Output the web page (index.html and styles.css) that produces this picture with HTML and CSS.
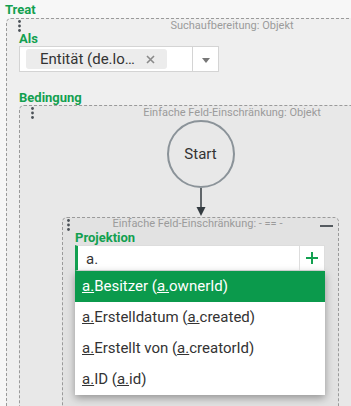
FILE: index.html
```html
<!DOCTYPE html>
<html lang="de">
<head>
    <meta charset="UTF-8">
    <title>Treat</title>
    <link rel="stylesheet" href="styles.css">
</head>
<body>
    <div class="page">
        <div class="label label-top">Treat</div>

        <!-- Suchaufbereitung -->
        <div class="node node-outer">
            <div class="node-head">
                <svg class="grip" width="3" height="12" viewBox="0 0 3 12"><circle cx="1.5" cy="1.5" r="1.4"/><circle cx="1.5" cy="6" r="1.4"/><circle cx="1.5" cy="10.5" r="1.4"/></svg>
                <span class="node-caption">Suchaufbereitung: Objekt</span>
                <span></span>
            </div>

            <div class="label">Als</div>
            <div class="select">
                <div class="select-value">
                    <span class="chip">
                        <span>Entität (de.lo…</span>
                        <svg class="chip-x" width="9" height="9" viewBox="0 0 9 9"><path d="M1 1 L8 8 M8 1 L1 8"/></svg>
                    </span>
                </div>
                <div class="select-toggle"><span class="caret"></span></div>
            </div>

            <div class="label label-gap">Bedingung</div>

            <!-- Einfache Feld-Einschränkung: Objekt -->
            <div class="node node-inner">
                <div class="node-head">
                    <svg class="grip" width="3" height="12" viewBox="0 0 3 12"><circle cx="1.5" cy="1.5" r="1.4"/><circle cx="1.5" cy="6" r="1.4"/><circle cx="1.5" cy="10.5" r="1.4"/></svg>
                    <span class="node-caption">Einfache Feld-Einschränkung: Objekt</span>
                    <span></span>
                </div>

                <div class="flow">
                    <div class="start">Start</div>
                    <svg class="flow-arrow" width="16" height="29" viewBox="0 0 16 29"><path class="arrow-line" d="M8 0 V20"/><path class="arrow-head" d="M3.5 19 H12.5 L8 28 Z"/></svg>

                    <!-- Einfache Feld-Einschränkung: - == - -->
                    <div class="node node-leaf">
                        <div class="node-head">
                            <svg class="grip" width="3" height="12" viewBox="0 0 3 12"><circle cx="1.5" cy="1.5" r="1.4"/><circle cx="1.5" cy="6" r="1.4"/><circle cx="1.5" cy="10.5" r="1.4"/></svg>
                            <span class="node-caption">Einfache Feld-Einschränkung: - == -</span>
                            <span class="minus"></span>
                        </div>

                        <div class="label">Projektion</div>
                        <div class="field">
                            <div class="field-input">a.</div>
                            <div class="field-add">
                                <svg width="12" height="12" viewBox="0 0 12 12"><path d="M6 0 V12 M0 6 H12"/></svg>
                            </div>
                        </div>
                        <ul class="suggest">
                            <li class="active"><u>a.</u>Besitzer (<u>a.</u>ownerId)</li>
                            <li><u>a.</u>Erstelldatum (<u>a.</u>created)</li>
                            <li><u>a.</u>Erstellt von (<u>a.</u>creatorId)</li>
                            <li><u>a.</u>ID (<u>a.</u>id)</li>
                        </ul>
                    </div>
                </div>
            </div>
        </div>
    </div>
</body>
</html>
```

FILE: styles.css
```css
/* General */
html, body {
    margin: 0;
    padding: 0;
    height: 406px;
    overflow: hidden;
}

body {
    font-family: Roboto, "Liberation Sans", sans-serif;
    background-color: #f7f7f7;
    color: #333333;
}

.page {
    padding-top: 3px;
    width: 351px;
}

/* Green labels */
.label {
    font-size: 13px;
    font-weight: bold;
    line-height: 14px;
    color: #12a050;
}

.label-top {
    margin-left: 5px;
    margin-bottom: 1px;
}

.label-gap {
    margin-top: 19px;
}

/* Nodes (dashed boxes) */
.node {
    border: 1px dashed #9a9a9a;
    border-radius: 5px;
    padding: 0 12px 0 12px;
}

.node-outer {
    margin-left: 6px;
    width: 424px;
    background-color: #efefef;
}

.node-inner {
    background-color: #e8e8e8;
    padding-bottom: 40px;
}

.node-leaf {
    background-color: #e2e2e2;
    padding-right: 13px;
    padding-bottom: 40px;
}

.node-head {
    display: grid;
    grid-template-columns: auto 1fr auto;
    align-items: start;
    height: 13px;
}

.grip {
    fill: #4b5157;
    margin-left: -1px;
    margin-top: 1px;
}

.node-leaf .grip {
    margin-left: -8px;
    margin-top: 1px;
}

.node-caption {
    font-size: 11px;
    line-height: 12px;
    color: #9b9b9b;
    text-align: center;
    white-space: nowrap;
    margin-top: 1px;
}

.node-leaf .node-caption {
    margin-top: 0;
}

.minus {
    width: 13px;
    height: 2px;
    background-color: #555b60;
    margin-top: 7px;
    margin-right: -8px;
}

/* Select with chip */
.select {
    display: flex;
    width: 198px;
    height: 24px;
    border: 1px solid #d4d4d4;
    background-color: #ffffff;
}

.select-value {
    flex: 1;
    padding: 2px 0 0 6px;
}

.chip {
    display: flex;
    align-items: center;
    justify-content: space-between;
    box-sizing: border-box;
    width: 141px;
    height: 20px;
    padding: 0 12px 0 14px;
    background-color: #ececec;
    border-radius: 3px;
    font-size: 15px;
    color: #333333;
}

.chip-x {
    stroke: #8a8a8a;
    stroke-width: 1.6;
}

.select-toggle {
    width: 25px;
    border-left: 1px solid #d4d4d4;
    display: flex;
    align-items: center;
    justify-content: center;
}

.caret {
    width: 0;
    height: 0;
    border-left: 4.5px solid transparent;
    border-right: 4.5px solid transparent;
    border-top: 5px solid #777777;
    margin-top: 2px;
}

/* Flow diagram */
.flow {
    margin-left: 30px;
    width: 277px;
    display: flex;
    flex-direction: column;
    align-items: center;
}

.start {
    box-sizing: border-box;
    width: 68px;
    height: 68px;
    margin-top: 1px;
    border: 2px solid #8b9399;
    border-radius: 50%;
    display: flex;
    align-items: center;
    justify-content: center;
    font-size: 15px;
    color: #333333;
}

.flow-arrow {
    display: block;
}

.arrow-line {
    stroke: #333b40;
    stroke-width: 1.5;
}

.arrow-head {
    fill: #333b40;
}

.flow .node-leaf {
    align-self: stretch;
}

/* Projection input */
.field {
    display: flex;
    height: 26px;
    box-sizing: border-box;
    border: 1px solid #dddddd;
    border-left: 3px solid #12a050;
    background-color: #ffffff;
}

.field-input {
    flex: 1;
    padding: 2px 0 0 8px;
    font-size: 15px;
    line-height: 22px;
    color: #333333;
}

.field-add {
    width: 24px;
    border-left: 1px solid #dddddd;
    display: flex;
    align-items: center;
    justify-content: center;
}

.field-add svg {
    stroke: #12a050;
    stroke-width: 2;
}

/* Suggestion list */
.suggest {
    list-style: none;
    margin: 0;
    padding: 0;
    background-color: #ffffff;
    box-shadow: 0 3px 8px rgba(0, 0, 0, 0.35);
}

.suggest li {
    height: 31px;
    line-height: 31px;
    padding-left: 7px;
    font-size: 15px;
    color: #333333;
    white-space: nowrap;
}

.suggest li.active {
    background-color: #0b9a4c;
    color: #ffffff;
}
```
